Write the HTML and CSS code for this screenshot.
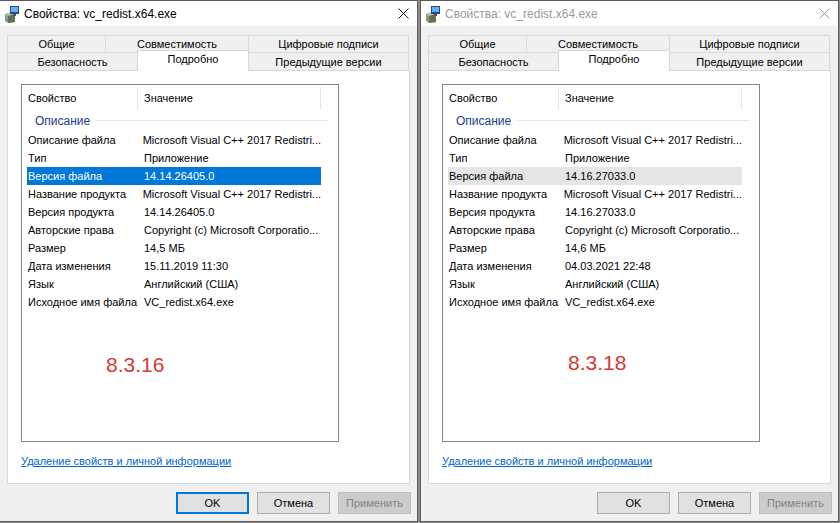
FILE: index.html
```html
<!DOCTYPE html>
<html lang="ru">
<head>
    <meta charset="UTF-8">
    <title>Свойства: vc_redist.x64.exe</title>
    <link rel="stylesheet" href="styles.css">
</head>
<body>

<div class="screen">

    <!-- левое окно, активное -->
    <div class="window active">
        <div class="titlebar">
            <svg class="app-icon" width="16" height="18" viewBox="0 0 16 18">
                <path d="M1 9 L8 7 L11 9 L11 17 L4 18 L1 16 Z" fill="#8a9a7c"/>
                <path d="M1 9 L8 7 L11 9 L4 11 Z" fill="#b9c4ad"/>
                <path d="M4 11 L11 9 L11 17 L4 18 Z" fill="#5f7352"/>
                <rect x="6" y="1" width="9" height="8" fill="#23489a"/>
                <rect x="7" y="2" width="7" height="5" fill="#63b2ee"/>
                <rect x="9" y="9" width="3" height="2" fill="#555"/>
            </svg>
            <span class="title">Свойства: vc_redist.x64.exe</span>
            <svg class="close" width="11" height="11" viewBox="0 0 11 11">
                <path d="M0.5 0.5 L10.5 10.5 M10.5 0.5 L0.5 10.5" stroke="currentColor" stroke-width="1"/>
            </svg>
        </div>
        <div class="body">
            <div class="tabs">
                <div class="tab-row">
                    <div class="tab w1">Общие</div>
                    <div class="tab w2">Совместимость</div>
                    <div class="tab w3">Цифровые подписи</div>
                </div>
                <div class="tab-row second">
                    <div class="tab w4">Безопасность</div>
                    <div class="tab w5 selected">Подробно</div>
                    <div class="tab w3">Предыдущие версии</div>
                </div>
            </div>
            <div class="panel">
                <div class="list">
                    <div class="list-head">
                        <span class="col-prop">Свойство</span>
                        <span class="col-val">Значение</span>
                    </div>
                    <div class="group">Описание</div>
                    <div class="row"><span class="col-prop">Описание файла</span><span class="col-val">Microsoft Visual C++ 2017 Redistri...</span></div>
                    <div class="row"><span class="col-prop">Тип</span><span class="col-val">Приложение</span></div>
                    <div class="row selected"><span class="col-prop">Версия файла</span><span class="col-val">14.14.26405.0</span></div>
                    <div class="row"><span class="col-prop">Название продукта</span><span class="col-val">Microsoft Visual C++ 2017 Redistri...</span></div>
                    <div class="row"><span class="col-prop">Версия продукта</span><span class="col-val">14.14.26405.0</span></div>
                    <div class="row"><span class="col-prop">Авторские права</span><span class="col-val">Copyright (c) Microsoft Corporatio...</span></div>
                    <div class="row"><span class="col-prop">Размер</span><span class="col-val">14,5 МБ</span></div>
                    <div class="row"><span class="col-prop">Дата изменения</span><span class="col-val">15.11.2019 11:30</span></div>
                    <div class="row"><span class="col-prop">Язык</span><span class="col-val">Английский (США)</span></div>
                    <div class="row"><span class="col-prop">Исходное имя файла</span><span class="col-val">VC_redist.x64.exe</span></div>
                    <div class="stamp stamp-left">8.3.16</div>
                </div>
                <a class="link" href="#">Удаление свойств и личной информации</a>
            </div>
            <div class="buttons">
                <button class="btn default">OK</button>
                <button class="btn">Отмена</button>
                <button class="btn" disabled>Применить</button>
            </div>
        </div>
    </div>

    <!-- правое окно, неактивное -->
    <div class="window inactive">
        <div class="titlebar">
            <svg class="app-icon" width="16" height="18" viewBox="0 0 16 18">
                <path d="M1 9 L8 7 L11 9 L11 17 L4 18 L1 16 Z" fill="#8a9a7c"/>
                <path d="M1 9 L8 7 L11 9 L4 11 Z" fill="#b9c4ad"/>
                <path d="M4 11 L11 9 L11 17 L4 18 Z" fill="#5f7352"/>
                <rect x="6" y="1" width="9" height="8" fill="#23489a"/>
                <rect x="7" y="2" width="7" height="5" fill="#63b2ee"/>
                <rect x="9" y="9" width="3" height="2" fill="#555"/>
            </svg>
            <span class="title">Свойства: vc_redist.x64.exe</span>
            <svg class="close" width="11" height="11" viewBox="0 0 11 11">
                <path d="M0.5 0.5 L10.5 10.5 M10.5 0.5 L0.5 10.5" stroke="currentColor" stroke-width="1"/>
            </svg>
        </div>
        <div class="body">
            <div class="tabs">
                <div class="tab-row">
                    <div class="tab w1">Общие</div>
                    <div class="tab w2">Совместимость</div>
                    <div class="tab w3">Цифровые подписи</div>
                </div>
                <div class="tab-row second">
                    <div class="tab w4">Безопасность</div>
                    <div class="tab w5 selected">Подробно</div>
                    <div class="tab w3">Предыдущие версии</div>
                </div>
            </div>
            <div class="panel">
                <div class="list">
                    <div class="list-head">
                        <span class="col-prop">Свойство</span>
                        <span class="col-val">Значение</span>
                    </div>
                    <div class="group">Описание</div>
                    <div class="row"><span class="col-prop">Описание файла</span><span class="col-val">Microsoft Visual C++ 2017 Redistri...</span></div>
                    <div class="row"><span class="col-prop">Тип</span><span class="col-val">Приложение</span></div>
                    <div class="row selected"><span class="col-prop">Версия файла</span><span class="col-val">14.16.27033.0</span></div>
                    <div class="row"><span class="col-prop">Название продукта</span><span class="col-val">Microsoft Visual C++ 2017 Redistri...</span></div>
                    <div class="row"><span class="col-prop">Версия продукта</span><span class="col-val">14.16.27033.0</span></div>
                    <div class="row"><span class="col-prop">Авторские права</span><span class="col-val">Copyright (c) Microsoft Corporatio...</span></div>
                    <div class="row"><span class="col-prop">Размер</span><span class="col-val">14,6 МБ</span></div>
                    <div class="row"><span class="col-prop">Дата изменения</span><span class="col-val">04.03.2021 22:48</span></div>
                    <div class="row"><span class="col-prop">Язык</span><span class="col-val">Английский (США)</span></div>
                    <div class="row"><span class="col-prop">Исходное имя файла</span><span class="col-val">VC_redist.x64.exe</span></div>
                    <div class="stamp stamp-right">8.3.18</div>
                </div>
                <a class="link" href="#">Удаление свойств и личной информации</a>
            </div>
            <div class="buttons">
                <button class="btn">OK</button>
                <button class="btn">Отмена</button>
                <button class="btn" disabled>Применить</button>
            </div>
        </div>
    </div>

</div>

</body>
</html>
```

FILE: styles.css
```css
body {
    margin: 0;
    background-color: #8e8e8e;
    font-family: "Liberation Sans", Arial, sans-serif;
    font-size: 11px;
    color: #000;
    overflow: hidden;
}
.screen {
    display: flex;
    gap: 2px;
    height: 523px;
    margin-left: -1px;
}
.window {
    width: 419px;
    height: 522px;
    box-sizing: border-box;
    border: 1px solid #5a5a5a;
    background-color: #f0f0f0;
    display: flex;
    flex-direction: column;
}
.titlebar {
    height: 25px;
    background-color: #fff;
    display: flex;
    align-items: center;
    padding-left: 4px;
    flex-shrink: 0;
}
.app-icon {
    margin-right: 4px;
}
.title {
    font-size: 12px;
}
.close {
    margin-left: auto;
    margin-right: 8px;
    color: #111;
}
.inactive .title,
.inactive .close {
    color: #9a9a9a;
}
.body {
    padding: 9px 7px 0 7px;
    display: flex;
    flex-direction: column;
}
.tab-row {
    display: flex;
    height: 18px;
}
.tab-row.second {
    height: 19px;
    margin-top: -1px;
}
.tab {
    box-sizing: border-box;
    border: 1px solid #d9d9d9;
    border-bottom: none;
    background-color: #f0f0f0;
    display: flex;
    align-items: center;
    justify-content: center;
    margin-left: -1px;
    padding-bottom: 1px;
}
.tab:first-child {
    margin-left: 0;
}
.tab-row:first-child .tab {
    border-bottom: 1px solid #d9d9d9;
}
.w1 { width: 99px; }
.w2 { width: 144px; }
.w3 { width: 161px; }
.w4 { width: 131px; }
.w5 { width: 112px; }
.tab.selected {
    position: relative;
    z-index: 1;
    background-color: #fff;
    height: 21px;
    margin-top: -2px;
    padding-bottom: 5px;
}
.panel {
    box-sizing: border-box;
    height: 414px;
    margin-top: -1px;
    width: 403px;
    background-color: #fff;
    border: 1px solid #d9d9d9;
    padding: 13px 0 0 13px;
    display: flex;
    flex-direction: column;
}
.list {
    position: relative;
    box-sizing: border-box;
    width: 318px;
    height: 358px;
    border: 1px solid #828790;
    flex-shrink: 0;
}
.list-head {
    display: flex;
    height: 25px;
    align-items: stretch;
}
.list-head span {
    box-sizing: border-box;
    display: flex;
    align-items: center;
    padding-left: 6px;
    border-right: 1px solid #e5e5e5;
    margin-top: 2px;
    padding-bottom: 2px;
}
.list-head .col-prop {
    width: 116px;
}
.list-head .col-val {
    width: 183px;
}
.group {
    height: 21px;
    display: flex;
    align-items: center;
    padding-left: 13px;
    color: #1e3c8c;
    font-size: 12px;
}
.group::after {
    content: "";
    flex: 1;
    height: 1px;
    background-color: #e5e5e5;
    margin-left: 6px;
    margin-right: 10px;
}
.row {
    display: flex;
    align-items: center;
    height: 18px;
    width: 294px;
    margin-left: 5px;
    white-space: nowrap;
}
.row .col-prop {
    width: 116px;
    padding-left: 1px;
}
.active .row.selected {
    background-color: #0078d7;
    color: #fff;
}
.inactive .row.selected {
    background-color: #e5e5e5;
}
.stamp {
    position: absolute;
    top: 268px;
    font-size: 21px;
    line-height: 24px;
    color: #d13b36;
}
.stamp-left {
    left: 84px;
}
.stamp-right {
    left: 125px;
    top: 266px;
}
.link {
    margin-top: 12px;
    color: #0066cc;
    text-decoration: underline;
    line-height: 14px;
}
.buttons {
    display: flex;
    justify-content: flex-end;
    gap: 8px;
    margin-top: 8px;
    margin-right: -1px;
}
.btn {
    box-sizing: border-box;
    width: 73px;
    height: 22px;
    padding: 0;
    font-family: "Liberation Sans", Arial, sans-serif;
    font-size: 11px;
    background-color: #e1e1e1;
    border: 1px solid #adadad;
    color: #000;
}
.btn.default {
    border: 2px solid #0078d7;
}
.btn:disabled {
    background-color: #cccccc;
    border-color: #bfbfbf;
    color: #838383;
}
```
